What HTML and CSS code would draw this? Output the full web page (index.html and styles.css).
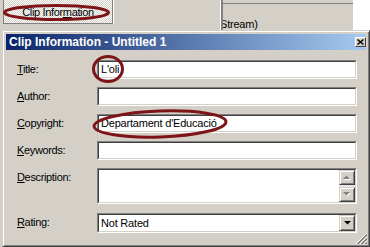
FILE: index.html
```html
<!DOCTYPE html>
<html lang="ca">
<head>
    <meta charset="UTF-8">
    <title>Clip Information</title>
    <link rel="stylesheet" href="styles.css">
</head>
<body>
    <div class="topbar">
        <div class="tool-btn">Clip Infor<u>m</u>ation</div>
        <div class="back-panel">
            <div class="back-inner">
                <div class="back-box"></div>
                <div class="back-text">Stream)</div>
            </div>
        </div>
        <div class="back-white"></div>
    </div>

    <div class="dialog">
        <div class="caption">
            <span class="caption-title">Clip Information - Untitled 1</span>
            <div class="close-btn">
                <svg width="7" height="6" viewBox="0 0 7 6"><path d="M0.5 0.5L6.5 5.5M6.5 0.5L0.5 5.5" stroke="#000" stroke-width="1.4"/></svg>
            </div>
        </div>

        <div class="form">
            <div class="row">
                <label><u>T</u>itle:</label>
                <div class="sunken"><div class="sunken-in field">L'oli</div></div>
            </div>
            <div class="row">
                <label><u>A</u>uthor:</label>
                <div class="sunken"><div class="sunken-in field"></div></div>
            </div>
            <div class="row">
                <label><u>C</u>opyright:</label>
                <div class="sunken"><div class="sunken-in field">Departament d'Educació</div></div>
            </div>
            <div class="row">
                <label><u>K</u>eywords:</label>
                <div class="sunken"><div class="sunken-in field"></div></div>
            </div>
            <div class="row">
                <label><u>D</u>escription:</label>
                <div class="sunken memo"><div class="sunken-in memo-in">
                    <div class="memo-text"></div>
                    <div class="vscroll">
                        <div class="raised sbtn">
                            <svg width="8" height="5" viewBox="0 0 8 5"><path d="M1 5h7L4.5 1.5z" fill="#fff"/><path d="M0 4h7L3.5 0.5z" fill="#808080"/></svg>
                        </div>
                        <div class="track"></div>
                        <div class="raised sbtn">
                            <svg width="8" height="5" viewBox="0 0 8 5"><path d="M1 1h7L4.5 4.5z" fill="#fff"/><path d="M0 0h7L3.5 3.5z" fill="#808080"/></svg>
                        </div>
                    </div>
                </div></div>
            </div>
            <div class="row row-rating">
                <label><u>R</u>ating:</label>
                <div class="sunken combo"><div class="sunken-in combo-in">
                    <div class="combo-text">Not Rated</div>
                    <div class="raised cbtn">
                        <svg width="7" height="4" viewBox="0 0 7 4"><path d="M0 0h7L3.5 3.5z" fill="#000"/></svg>
                    </div>
                </div></div>
            </div>
        </div>

        <svg class="grip" width="12" height="12" viewBox="0 0 12 12" shape-rendering="crispEdges">
            <path d="M11 0L0 11M11 4L4 11M11 8L8 11" stroke="#fff"/>
            <path d="M11 1L1 11M11 2L2 11M11 5L5 11M11 6L6 11M11 9L9 11M11 10L10 11" stroke="#808080"/>
        </svg>
    </div>

    <!-- red marks drawn over the screenshot -->
    <svg class="marks" width="370" height="247" viewBox="0 0 370 247">
        <ellipse cx="56.5" cy="12.5" rx="52" ry="7" />
        <ellipse cx="108" cy="69" rx="14.5" ry="12.5" />
        <ellipse cx="160" cy="124" rx="66" ry="13" transform="rotate(-2 160 124)" />
    </svg>
</body>
</html>
```

FILE: styles.css
```css
* {
    margin: 0;
    padding: 0;
    box-sizing: border-box;
}

body {
    width: 370px;
    height: 247px;
    overflow: hidden;
    position: relative;
    background: #d4d0c8;
    font-family: 'Liberation Sans', Arial, sans-serif;
    font-size: 11px;
    letter-spacing: -0.2px;
    color: #000;
}

/* window behind the dialog */
.topbar {
    display: flex;
    height: 30px;
}

.tool-btn {
    margin-left: 3px;
    width: 110px;
    height: 24px;
    border: 1px solid #808080;
    border-top: none;
    box-shadow: 1px 0 0 #fff;
    background-color: #fff;
    background-image: conic-gradient(#d4d0c8 25%, #fff 0 50%, #d4d0c8 0 75%, #fff 0);
    background-size: 2px 2px;
    display: flex;
    align-items: center;
    justify-content: center;
    letter-spacing: -0.35px;
}

.back-panel {
    margin-left: 107px;
    width: 133px;
    border-left: 1px solid #fff;
}

.back-inner {
    height: 100%;
    border-left: 2px solid #808080;
    overflow: hidden;
}

.back-box {
    height: 4px;
    border-bottom: 1px solid #808080;
}

.back-text {
    margin: 15px 0 0 -3px;
    line-height: 11px;
    white-space: nowrap;
}

.back-white {
    flex: 1;
    background: #fff;
}

/* dialog */
.dialog {
    margin-left: 2px;
    width: 368px;
    height: 217px;
    border: 1px solid;
    border-color: #d4d0c8 #404040 #404040 #d4d0c8;
    box-shadow: inset 1px 1px #fff, inset -1px -1px #808080;
    padding: 3px;
    display: flex;
    flex-direction: column;
    position: relative;
}

.caption {
    height: 16px;
    background: linear-gradient(to right, #0a246a, #a6caf0);
    display: flex;
    align-items: center;
    justify-content: space-between;
    padding: 0 0 0 3px;
    color: #fff;
    font-weight: bold;
    font-size: 12px;
    letter-spacing: 0;
    white-space: nowrap;
}

.close-btn {
    width: 11px;
    height: 10px;
    background: #d4d0c8;
    border: 1px solid;
    border-color: #fff #404040 #404040 #fff;
    display: flex;
    align-items: center;
    justify-content: center;
}

.close-btn svg {
    display: block;
}

.form {
    padding: 10px 9px 0 11px;
    display: flex;
    flex-direction: column;
    gap: 8px;
}

.row {
    display: flex;
}

.row label {
    width: 80px;
    line-height: 19px;
    letter-spacing: -0.35px;
    white-space: nowrap;
}

.row-rating {
    margin-top: 1px;
}

.sunken {
    flex: 1;
    height: 19px;
    border: 1px solid;
    border-color: #808080 #fff #fff #808080;
}

.sunken-in {
    height: 100%;
    background: #fff;
    border: 1px solid;
    border-color: #404040 #d4d0c8 #d4d0c8 #404040;
}

.field {
    padding: 0 2px;
    line-height: 15px;
    white-space: nowrap;
}

.memo {
    height: 36px;
}

.memo-in,
.combo-in {
    display: flex;
}

.memo-text,
.combo-text {
    flex: 1;
}

.combo {
    height: 20px;
}

.combo-text {
    padding: 0 2px;
    line-height: 16px;
}

.raised {
    background: #d4d0c8;
    border: 1px solid;
    border-color: #d4d0c8 #404040 #404040 #d4d0c8;
    box-shadow: inset 1px 1px #fff, inset -1px -1px #808080;
    display: flex;
    align-items: center;
    justify-content: center;
}

.raised svg {
    display: block;
}

.vscroll {
    width: 16px;
    display: flex;
    flex-direction: column;
}

.sbtn {
    height: 15px;
}

.track {
    height: 2px;
    background-color: #fff;
    background-image: conic-gradient(#d4d0c8 25%, #fff 0 50%, #d4d0c8 0 75%, #fff 0);
    background-size: 2px 2px;
}

.cbtn {
    width: 16px;
    height: 16px;
}

.grip {
    position: absolute;
    right: 1px;
    bottom: 1px;
}

.marks {
    position: absolute;
    left: 0;
    top: 0;
    pointer-events: none;
}

.marks ellipse {
    fill: none;
    stroke: #7d1418;
    stroke-width: 3;
}
```
